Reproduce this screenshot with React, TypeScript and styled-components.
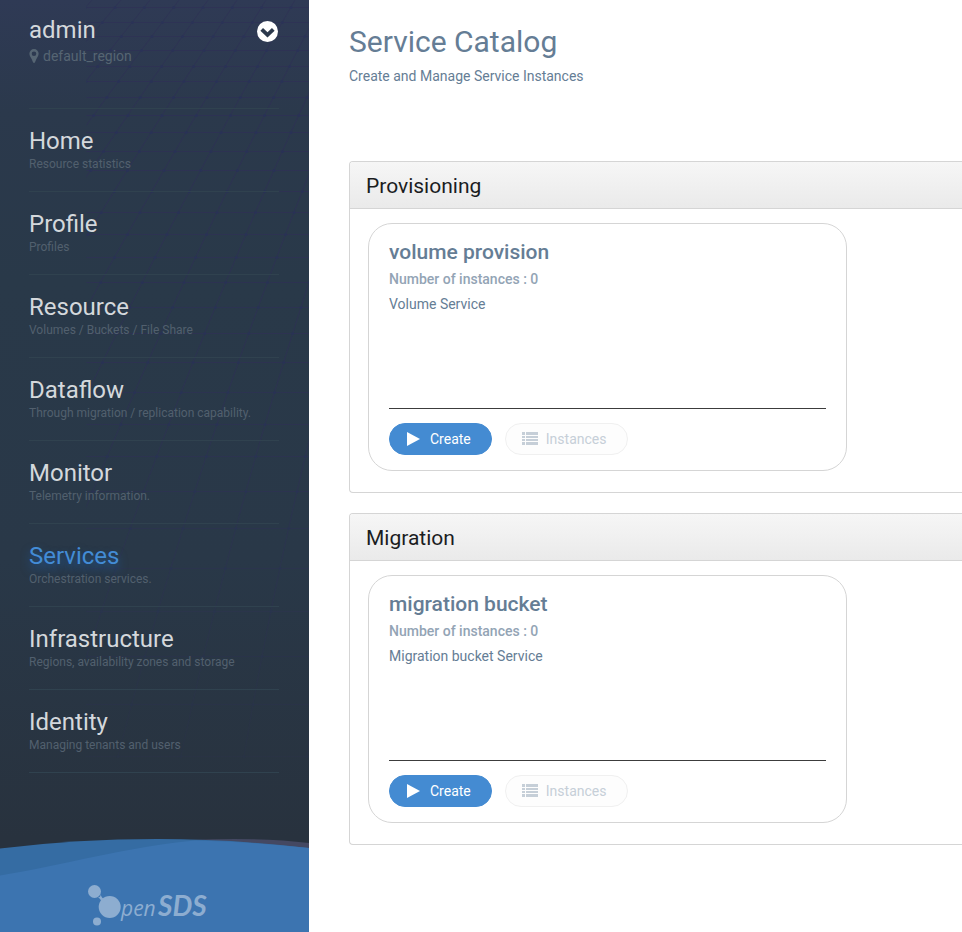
import React from "react";
import styled, { createGlobalStyle } from "styled-components";

const GlobalStyle = createGlobalStyle`
  *, *::before, *::after { box-sizing: border-box; }
  body {
    margin: 0;
    background: #fff;
    color: #657d95;
    font-family: Roboto, "Liberation Sans", sans-serif;
    font-size: 14px;
    line-height: 20px;
  }
  h1, h2, h3, p, ul { margin: 0; padding: 0; }
  button { font-family: inherit; }
`;

const Shell = styled.div`
  display: flex;
  min-height: 100vh;
  overflow: hidden;
`;

const Sidebar = styled.aside`
  position: relative;
  isolation: isolate;
  display: flex;
  flex-direction: column;
  flex: 0 0 309px;
  background: linear-gradient(180deg, #2f3a55 0%, #2b394c 12%, #293949 30%, #293848 60%, #28323e 90%);
`;

const Mesh = styled.svg`
  position: absolute;
  z-index: -1;
  top: 0;
  right: 0;
  stroke: #2f3056;
  fill: #29305a;
`;

const Account = styled.header`
  display: flex;
  justify-content: space-between;
  align-items: flex-start;
  min-height: 109px;
  margin: 0 30px 0 29px;
  padding-top: 16px;
  border-bottom: 1px solid #30424f;
`;

const AccountName = styled.p`
  color: #d4d8dc;
  font-size: 24px;
  line-height: 28px;
`;

const Region = styled.p`
  display: flex;
  align-items: center;
  gap: 4px;
  margin-top: 2px;
  color: #566573;
  font-size: 14px;
  line-height: 20px;
`;

const AccountButton = styled.button`
  display: flex;
  margin: 5px 1px 0 0;
  padding: 0;
  border: 0;
  border-radius: 50%;
  background: none;
  cursor: pointer;
`;

const NavList = styled.ul`
  margin: 0 30px 0 29px;
  list-style: none;
`;

const NavItem = styled.li`
  height: 83px;
  padding-top: 18px;
  border-bottom: 1px solid #30424f;
`;

const NavLink = styled.a<{ $active?: boolean }>`
  display: block;
  color: ${(p) => (p.$active ? "#438cd6" : "#d4d8dc")};
  text-shadow: ${(p) => (p.$active ? "0 5px 10px rgba(30, 110, 200, 0.6)" : "none")};
  font-size: 24px;
  line-height: 28px;
  text-decoration: none;
`;

const NavHint = styled.span`
  display: block;
  color: #52606e;
  text-shadow: none;
  font-size: 12px;
  line-height: 18px;
  white-space: nowrap;
`;

const Brand = styled.footer`
  display: flex;
  margin-top: auto;
  svg { display: block; width: 100%; }
`;

const Main = styled.main`
  flex: 1;
  min-width: 0;
  padding: 24px 0 24px 40px;
`;

const PageHeader = styled.header`
  min-height: 137px;
`;

const PageTitle = styled.h1`
  font-size: 30px;
  font-weight: 400;
  line-height: 36px;
`;

const PageIntro = styled.p`
  margin-top: 6px;
`;

const Panel = styled.section`
  margin-bottom: 20px;
  border: 1px solid #d5d5d5;
  border-right: 0;
  border-radius: 4px 0 0 4px;
  overflow: hidden;
`;

const PanelTitle = styled.h2`
  padding: 10px 16px 8px;
  border-bottom: 1px solid #d5d5d5;
  background: linear-gradient(180deg, #f6f6f6, #eaeaea);
  color: #1b1d1f;
  font-size: 21px;
  font-weight: 400;
  line-height: 28px;
`;

const PanelBody = styled.div`
  padding: 14px 18px 21px;
`;

const Card = styled.article`
  display: flex;
  flex-direction: column;
  max-width: 479px;
  min-height: 248px;
  padding: 14px 20px 15px;
  border: 1px solid #d5d5d5;
  border-radius: 24px;
`;

const CardTitle = styled.h3`
  font-size: 21px;
  font-weight: 500;
  line-height: 28px;
`;

const CardCount = styled.p`
  margin-top: 3px;
  color: #93a4b5;
  font-weight: 500;
`;

const CardText = styled.p`
  margin-top: 5px;
`;

const Actions = styled.div`
  display: flex;
  gap: 13px;
  margin-top: auto;
  padding-top: 14px;
  border-top: 1px solid #3c3c3c;
`;

const PillButton = styled.button<{ $primary?: boolean }>`
  display: flex;
  align-items: center;
  gap: ${(p) => (p.$primary ? "10px" : "8px")};
  height: 32px;
  padding: ${(p) => (p.$primary ? "0 20px 0 17px" : "0 21px 0 16px")};
  border: 1px solid ${(p) => (p.$primary ? "#448bd2" : "#f0f0f0")};
  border-radius: 16px;
  background: ${(p) => (p.$primary ? "#448bd2" : "#fdfdfd")};
  color: ${(p) => (p.$primary ? "#fff" : "#c6cfd8")};
  font-size: 14px;
  line-height: 20px;
`;

const MESH_ROWS = [7, 22, 36, 50, 66, 81, 97, 115, 132, 151, 170, 191, 212, 234, 257, 282, 307, 333, 362, 392, 424, 456, 491, 528, 568, 611, 656, 704, 756];
const MESH_RAYS = Array.from({ length: 16 }, (_, i) => i - 6);
const MESH_HEIGHT = 780;

const rayX = (ray: number, y: number) => 180 + 29 * ray + y * (0.045 * ray - 0.62) + y * y * 0.00012;

const MeshPattern = () => (
  <Mesh width="223" height={MESH_HEIGHT} viewBox={`0 0 223 ${MESH_HEIGHT}`} aria-hidden="true">
    <defs>
      <linearGradient id="meshFade" x1="0" y1="0" x2="0" y2="1">
        <stop offset="0" stopColor="#999" />
        <stop offset="0.15" stopColor="#bbb" />
        <stop offset="0.5" stopColor="#aaa" />
        <stop offset="1" stopColor="#222" />
      </linearGradient>
      <mask id="meshMask">
        <rect width="223" height={MESH_HEIGHT} fill="url(#meshFade)" />
      </mask>
    </defs>
    <g mask="url(#meshMask)">
      {MESH_ROWS.map((y) => (
        <line key={y} x1="0" x2="223" y1={y + 0.5} y2={y + 0.5} />
      ))}
      {MESH_RAYS.map((ray) => (
        <polyline
          key={ray}
          fill="none"
          points={[0, ...MESH_ROWS].map((y) => `${rayX(ray, y)},${y}`).join(" ")}
        />
      ))}
      {MESH_RAYS.flatMap((ray) =>
        MESH_ROWS.map((y) => (
          <circle key={`${ray}-${y}`} cx={rayX(ray, y)} cy={y + 0.5} r="1.500" stroke="none" />
        )),
      )}
    </g>
  </Mesh>
);

const PinIcon = () => (
  <svg width="10" height="14" viewBox="0 0 10 14" fill="currentColor" fillRule="evenodd" aria-hidden="true">
    <path d="M5 0a4.600 4.600 0 0 1 4.600 4.700c0 2-1.400 3.400-2.200 5.400L6 13.300c-.4.9-1.600.9-2 0L2.600 10.100C1.800 8.100.4 6.700.4 4.700A4.600 4.600 0 0 1 5 0Zm0 2.400a2.300 2.300 0 1 0 0 4.600 2.300 2.300 0 0 0 0-4.600Z" />
  </svg>
);

const ChevronCircle = () => (
  <svg width="21" height="21" viewBox="0 0 21 21" aria-hidden="true">
    <circle cx="10.500" cy="10.500" r="10.500" fill="#fff" />
    <path d="m4.700 8.300 5.800 5.600 5.800-5.600" fill="none" stroke="#2c394c" strokeWidth="3.800" />
  </svg>
);

const PlayIcon = () => (
  <svg width="13" height="14" viewBox="0 0 13 14" fill="currentColor" aria-hidden="true">
    <path d="M0 0 13 7 0 14Z" />
  </svg>
);

const ListIcon = () => (
  <svg width="16" height="14" viewBox="0 0 16 14" fill="currentColor" aria-hidden="true">
    <path d="M0 0h3v3H0zM0 4h3v2H0zM0 7h3v2H0zM0 10h3v3H0zM4 0h12v3H4zM4 4h12v2H4zM4 7h12v2H4zM4 10h12v3H4z" />
  </svg>
);

const BrandArt = () => (
  <svg viewBox="0 0 309 93" role="img" aria-label="OpenSDS">
    <path d="M190 1Q260-2 309 4V93H190Z" fill="#444862" />
    <path d="M0 9.500Q155-9 309 9V93H0Z" fill="#356ca3" />
    <path d="M0 36.500C60 27 130 7 195 1.500Q255 3 309 9V93H0Z" fill="#3c74b0" />
    <g fill="#8dadd0">
      <circle cx="94.500" cy="52.500" r="6.500" />
      <path d="M98 58.500c3-.5 2.500-2.500 2.800-3.500 0 3 2 4.500 4 5.500l-3 3c-1-2.500-1.800-4.500-3.800-5Z" />
      <circle cx="109.700" cy="68" r="11" />
      <circle cx="97" cy="82.500" r="4" />
      <g fontStyle="italic">
        <text x="121" y="77" fontSize="21" fontFamily='"Open Sans", "Noto Sans", sans-serif'>pen</text>
        <text x="158" y="77" fontSize="28" fontWeight="700" fontFamily="Lato, sans-serif">SDS</text>
      </g>
    </g>
  </svg>
);

const NAV = [
  { title: "Home", hint: "Resource statistics" },
  { title: "Profile", hint: "Profiles" },
  { title: "Resource", hint: "Volumes / Buckets / File Share" },
  { title: "Dataflow", hint: "Through migration / replication capability." },
  { title: "Monitor", hint: "Telemetry information." },
  { title: "Services", hint: "Orchestration services." },
  { title: "Infrastructure", hint: "Regions, availability zones and storage" },
  { title: "Identity", hint: "Managing tenants and users" },
];

const CATALOG = [
  { group: "Provisioning", name: "volume provision", count: 0, text: "Volume Service" },
  { group: "Migration", name: "migration bucket", count: 0, text: "Migration bucket Service" },
];

export default function App() {
  return (
    <>
      <GlobalStyle />
      <Shell>
        <Sidebar>
          <MeshPattern />
          <Account>
            <div>
              <AccountName>admin</AccountName>
              <Region>
                <PinIcon />
                default_region
              </Region>
            </div>
            <AccountButton type="button" aria-label="Account menu">
              <ChevronCircle />
            </AccountButton>
          </Account>
          <nav>
            <NavList>
              {NAV.map((item) => (
                <NavItem key={item.title}>
                  <NavLink href="#" $active={item.title === "Services"}>
                    {item.title}
                    <NavHint>{item.hint}</NavHint>
                  </NavLink>
                </NavItem>
              ))}
            </NavList>
          </nav>
          <Brand>
            <BrandArt />
          </Brand>
        </Sidebar>
        <Main>
          <PageHeader>
            <PageTitle>Service Catalog</PageTitle>
            <PageIntro>Create and Manage Service Instances</PageIntro>
          </PageHeader>
          {CATALOG.map((entry) => (
            <Panel key={entry.group}>
              <PanelTitle>{entry.group}</PanelTitle>
              <PanelBody>
                <Card>
                  <CardTitle>{entry.name}</CardTitle>
                  <CardCount>Number of instances : {entry.count}</CardCount>
                  <CardText>{entry.text}</CardText>
                  <Actions>
                    <PillButton type="button" $primary>
                      <PlayIcon />
                      Create
                    </PillButton>
                    <PillButton type="button" disabled={entry.count === 0}>
                      <ListIcon />
                      Instances
                    </PillButton>
                  </Actions>
                </Card>
              </PanelBody>
            </Panel>
          ))}
        </Main>
      </Shell>
    </>
  );
}
